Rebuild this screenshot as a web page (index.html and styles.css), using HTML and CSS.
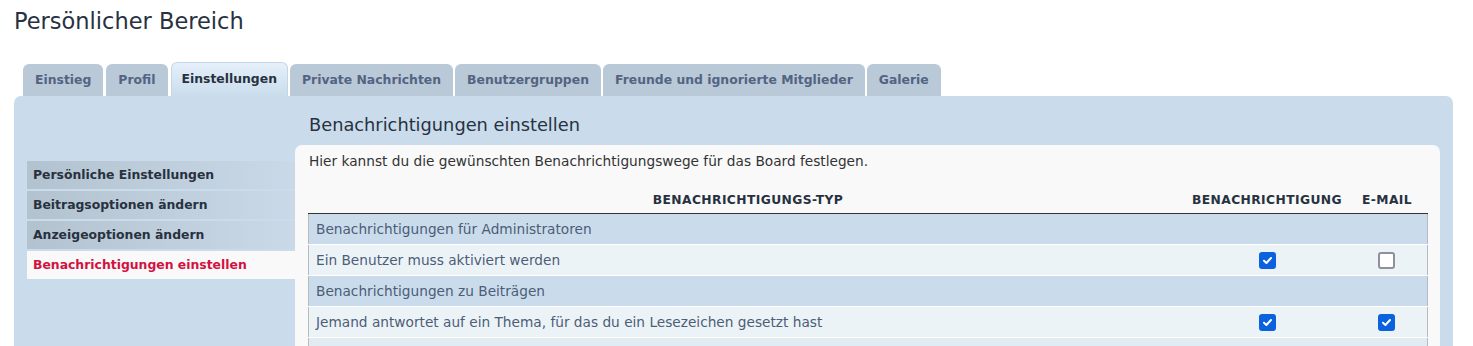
FILE: index.html
```html
<!DOCTYPE html>
<html lang="de">
<head>
  <meta charset="UTF-8" />
  <title>Persönlicher Bereich</title>
  <link rel="stylesheet" href="styles.css">
</head>
<body>
  <h2 class="page-title">Persönlicher Bereich</h2>

  <ul class="tabs">
    <li class="tab">Einstieg</li>
    <li class="tab">Profil</li>
    <li class="tab tab-active">Einstellungen</li>
    <li class="tab">Private Nachrichten</li>
    <li class="tab">Benutzergruppen</li>
    <li class="tab">Freunde und ignorierte Mitglieder</li>
    <li class="tab">Galerie</li>
  </ul>

  <div class="panel">
    <!-- left menu -->
    <ul class="side-menu">
      <li class="side-item">Persönliche Einstellungen</li>
      <li class="side-item">Beitragsoptionen ändern</li>
      <li class="side-item">Anzeigeoptionen ändern</li>
      <li class="side-item side-active">Benachrichtigungen einstellen</li>
    </ul>

    <div class="main">
      <h3 class="main-title">Benachrichtigungen einstellen</h3>
      <div class="content">
        <p class="intro">Hier kannst du die gewünschten Benachrichtigungswege für das Board festlegen.</p>

        <table class="notify-table">
          <thead>
            <tr>
              <th class="col-type">Benachrichtigungs-Typ</th>
              <th class="col-notify">Benachrichtigung</th>
              <th class="col-mail">E-Mail</th>
            </tr>
          </thead>
          <tbody>
            <tr class="row-group">
              <td colspan="3">Benachrichtigungen für Administratoren</td>
            </tr>
            <tr class="row-item">
              <td>Ein Benutzer muss aktiviert werden</td>
              <td class="cell-check"><input type="checkbox" checked></td>
              <td class="cell-check"><input type="checkbox"></td>
            </tr>
            <tr class="row-group">
              <td colspan="3">Benachrichtigungen zu Beiträgen</td>
            </tr>
            <tr class="row-item">
              <td>Jemand antwortet auf ein Thema, für das du ein Lesezeichen gesetzt hast</td>
              <td class="cell-check"><input type="checkbox" checked></td>
              <td class="cell-check"><input type="checkbox" checked></td>
            </tr>
            <tr class="row-item row-alt">
              <td colspan="3"></td>
            </tr>
          </tbody>
        </table>
      </div>
    </div>
  </div>
</body>
</html>
```

FILE: styles.css
```css
body {
  margin: 0;
  padding: 0 20px 0 14px;
  font-family: "DejaVu Sans", Verdana, sans-serif;
  font-size: 13.7px;
  color: #333;
  background: #fff;
}
.page-title {
  margin: 0;
  padding-top: 6px;
  font-size: 22.5px;
  font-weight: normal;
  line-height: 30px;
  color: #28313f;
}
.tabs {
  display: flex;
  align-items: flex-end;
  gap: 2px;
  list-style: none;
  margin: 25px 0 0 0;
  padding: 0 0 0 9px;
  height: 35px;
}
.tab {
  height: 32px;
  line-height: 32px;
  padding: 0 12px;
  background: #b9c9d7;
  color: #536482;
  font-weight: bold;
  font-size: 12.4px;
  border-radius: 6px 6px 0 0;
}
.tab:nth-child(2) {
  margin-left: 1px;
}
.tab-active {
  height: 33px;
  line-height: 31px;
  padding: 0 10px;
  margin-left: 1px;
  background: linear-gradient(to bottom, #e5f0fb, #cadceb);
  color: #28313f;
  border: 1px solid #c5d6e6;
  border-bottom: none;
}
.panel {
  display: flex;
  background: #cadceb;
  border-radius: 7px;
  padding: 0 13px 0 13px;
  min-height: 260px;
}
.side-menu {
  list-style: none;
  margin: 65px 0 0 0;
  padding: 0;
  width: 268px;
  flex: none;
}
.side-item {
  height: 28px;
  line-height: 28px;
  margin-bottom: 2px;
  padding-left: 6px;
  font-size: 12.4px;
  font-weight: bold;
  color: #28313f;
  background: linear-gradient(to right, #b2c2cf, #c9d9e7);
}
.side-active {
  background: #f9f9f9;
  color: #d31141;
}
.main {
  flex: 1;
}
.main-title {
  margin: 0;
  padding: 17px 0 0 14px;
  font-size: 17.8px;
  font-weight: normal;
  line-height: 24px;
  height: 32px;
  color: #28313f;
}
.content {
  background: #f9f9f9;
  border-radius: 7px 7px 0 0;
  padding: 8px 12px 0 13px;
  min-height: 220px;
}
.intro {
  margin: 0 0 0 1px;
  line-height: 17px;
}
.notify-table {
  width: 100%;
  margin-top: 16px;
  border-collapse: collapse;
}
.notify-table th {
  font-size: 12.3px;
  font-weight: bold;
  text-transform: uppercase;
  color: #28313f;
  height: 27px;
  border-bottom: 1px solid #333;
  padding: 0;
  letter-spacing: 0.4px;
}
.col-notify {
  width: 159px;
}
.col-mail {
  width: 81px;
}
.notify-table td {
  height: 30px;
  padding: 0 7px;
  color: #4c5d77;
  border-top: 1px solid #fff;
}
.notify-table tbody tr {
  border-left: 1px solid #b4bac0;
  border-right: 1px solid #b4bac0;
}
.row-group td {
  background: #cadceb;
}
.row-item td {
  background: #ecf3f7;
}
.row-alt td {
  background: #e1ebf2;
}
.cell-check {
  text-align: center;
}
.cell-check input {
  appearance: none;
  width: 17px;
  height: 17px;
  margin: 0;
  vertical-align: middle;
  border: 2px solid #8f8f9d;
  border-radius: 3px;
  background: #fff;
}
.cell-check input:checked {
  border-color: #0b62de;
  background: #0b62de url("data:image/svg+xml;utf8,<svg xmlns='http://www.w3.org/2000/svg' viewBox='0 0 13 13'><path d='M3 6.8 L5.4 9 L10 4' fill='none' stroke='white' stroke-width='2' stroke-linecap='round' stroke-linejoin='round'/></svg>") center / 13px 13px no-repeat;
}
```
